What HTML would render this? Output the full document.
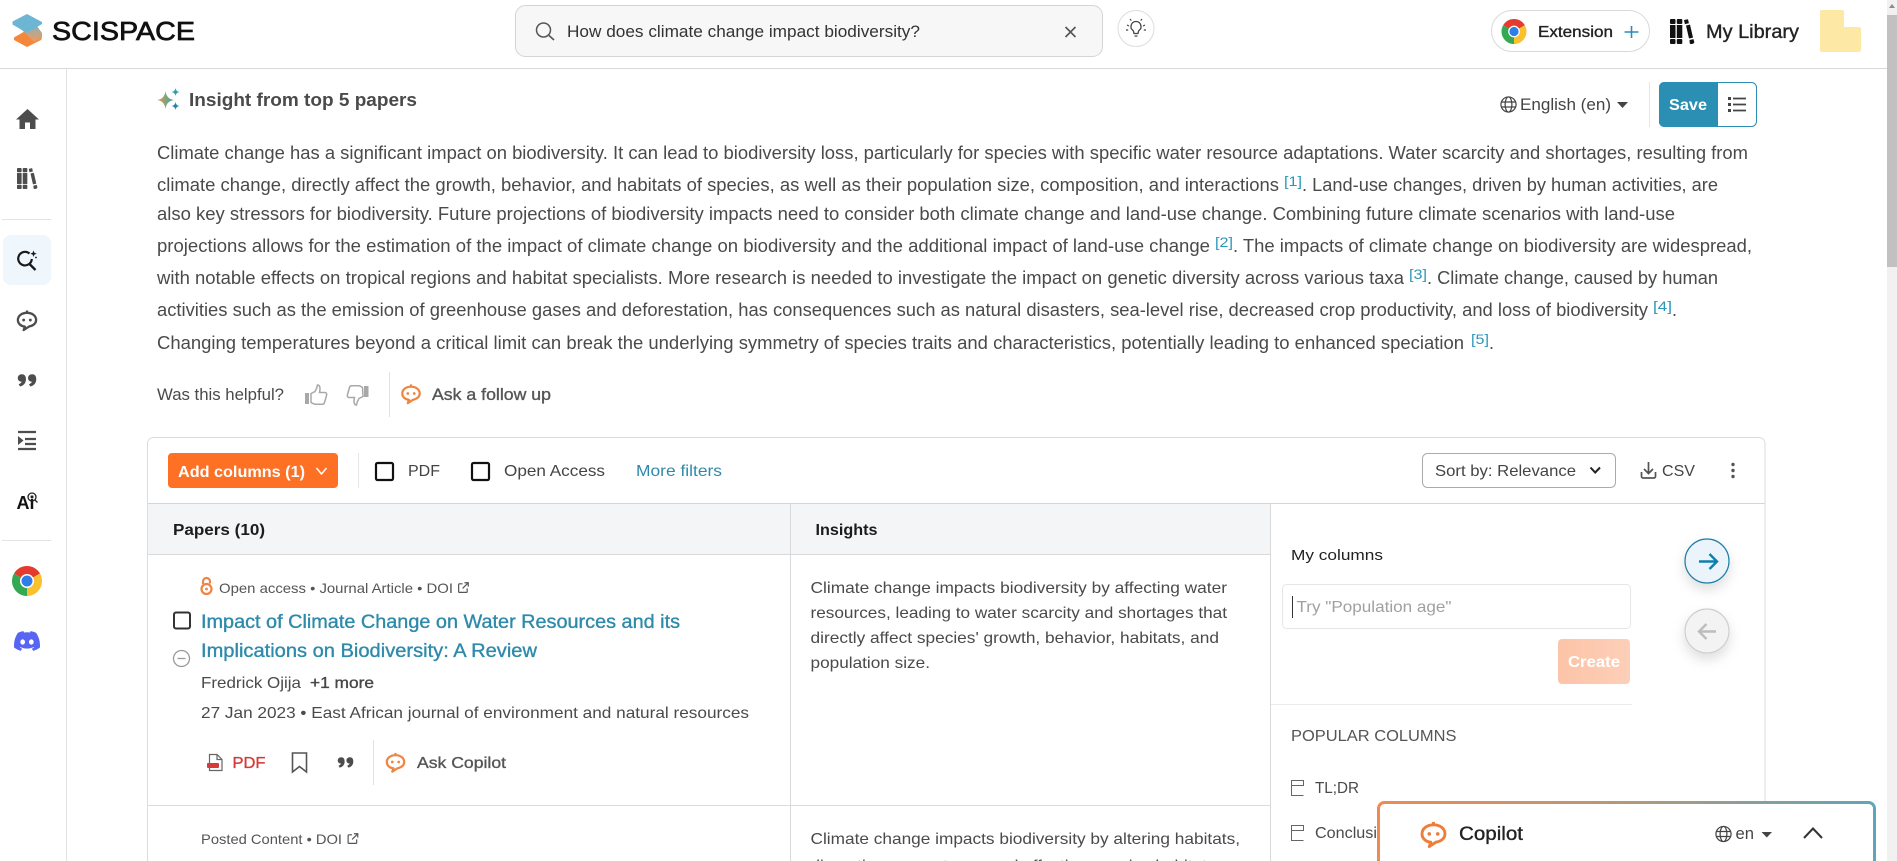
<!DOCTYPE html>
<html lang="en"><head><meta charset="utf-8"><title>SciSpace</title>
<style>
html,body{margin:0;padding:0;width:1897px;height:861px;overflow:hidden;background:#fff}
svg{display:block;font-family:"Liberation Sans",sans-serif}
.b{font-size:18px;fill:#4a4a4a}
.s{font-size:16px;fill:#4a4a4a}
.m{stroke-width:.35px;paint-order:stroke}
.cite{font-size:14px;fill:#2b97b8}
.link{fill:#2e8aaa}
</style></head><body>
<svg width="1897" height="861" viewBox="0 0 1897 861" xmlns="http://www.w3.org/2000/svg">
<defs>
<linearGradient id="cb" x1="0" x2="1" y1="0" y2="0"><stop offset="0" stop-color="#f08a52"/><stop offset=".5" stop-color="#b59878"/><stop offset="1" stop-color="#5fa5ba"/></linearGradient>
<linearGradient id="spk" x1="0" x2="1" y1="0" y2="0"><stop offset="0" stop-color="#e59a55"/><stop offset="1" stop-color="#32a89f"/></linearGradient>
<linearGradient id="lg" x1="0" x2="0" y1="0" y2="1"><stop offset="0" stop-color="#8fb0b4"/><stop offset="1" stop-color="#f39a5a"/></linearGradient>
<linearGradient id="cr" x1="0" x2="1" y1="0" y2="0"><stop offset="0" stop-color="#fcc4a8"/><stop offset="1" stop-color="#fdcfb8"/></linearGradient>
<filter id="sh" x="-50%" y="-50%" width="200%" height="220%"><feDropShadow dx="0" dy="6" stdDeviation="6" flood-color="#000" flood-opacity=".13"/></filter>
<symbol id="chat" viewBox="0 0 24 24"><path d="M12 4C6.500 4 2.500 7.200 2.500 11.500c0 3.700 3 6.500 7.300 6.900L8.500 22l5.600-3.700c4.400-.7 7.400-3.300 7.400-6.800C21.500 7.200 17.500 4 12 4zM12 4V1.500" fill="none" stroke="currentColor" stroke-width="2.400" stroke-linejoin="round"/><circle cx="8.500" cy="11.500" r="1.500" fill="currentColor"/><circle cx="15.500" cy="11.500" r="1.500" fill="currentColor"/></symbol>
<symbol id="quo" viewBox="0 0 24 17"><path d="M5.500 1C2.500 1 1 2.800 1 5s1.500 4 4 4c.5 0 1 0 1.300-.2-.4 2-1.700 3.500-3.800 4.400L3.500 15C7.500 14 10 10.800 10 6.500 10 3 8.300 1 5.500 1zM18.500 1C15.500 1 14 2.800 14 5s1.500 4 4 4c.5 0 1 0 1.300-.2-.4 2-1.700 3.500-3.800 4.400l1 1.800c4-1 6.500-4.200 6.500-8.500C23 3 21.300 1 18.500 1z" fill="currentColor" stroke="currentColor" stroke-width="1.400"/></symbol>
<symbol id="ext" viewBox="0 0 12 12"><path d="M5 2H1.500A.8.800 0 0 0 .7 2.800v7.700a.8.800 0 0 0 .8.800h7.700a.8.800 0 0 0 .8-.8V7M7 .8h4.200V5M11 1 5 7" fill="none" stroke="currentColor" stroke-width="1.300"/></symbol>
<symbol id="chrome" viewBox="-12 -12 24 24"><path d="M0 0L-10.390 -6A12 12 0 0 1 10.390 -6Z" fill="#e33b2e"/><path d="M0 0L10.390 -6A12 12 0 0 1 0 12Z" fill="#fbc02d"/><path d="M0 0L0 12A12 12 0 0 1 -10.390 -6Z" fill="#35a853"/><circle r="5.600" fill="#fff"/><circle r="4.400" fill="#2f7ee8"/></symbol>
<symbol id="lib" viewBox="0 0 25 25"><g fill="currentColor"><rect x="0" y="0" width="5.500" height="5" rx="1"/><rect x="0" y="6" width="5.500" height="13"/><rect x="0" y="20" width="5.500" height="5" rx="1"/><rect x="6.800" y="0" width="5.500" height="5" rx="1"/><rect x="6.800" y="6" width="5.500" height="13"/><rect x="6.800" y="20" width="5.500" height="5" rx="1"/><path d="M14 1l4-.8.9 4-4 .9zM16 6.500l4-.9 3 13-4 .9zM19.500 21l4-.9.7 2.700c.2 1-.5 1.700-1.300 1.900l-1.500.3c-.8.200-1.500-.3-1.700-1z"/></g></symbol>
<symbol id="glob" viewBox="0 0 18 18"><g fill="none" stroke="currentColor" stroke-width="1.300"><circle cx="9" cy="9" r="8"/><ellipse cx="9" cy="9" rx="3.600" ry="8"/><path d="M1.200 6.300h15.600M1.200 11.700h15.600"/></g></symbol>
<symbol id="col" viewBox="0 0 13 16"><path d="M.5.500h12v5H.5zM.5 5.500v10h12" fill="none" stroke="#666" stroke-width="1"/></symbol>
</defs>

<!-- scrollbar -->
<rect x="1887" y="0" width="10" height="861" fill="#f1f1f1"/>
<rect x="1887" y="15" width="10" height="252" fill="#c1c1c1"/>
<path d="M1892 4l3 4h-6z" fill="#8a8a8a"/>

<!-- header -->
<rect x="0" y="68" width="1887" height="1" fill="#d9d9d9"/>
<path d="M14 37.500L27 30l15 8-1 2-14 7-13-7z" fill="#f5873a"/>
<path d="M18 26l9 6 10-6 5 7v5l-8 4-10-10z" fill="url(#lg)"/>
<path d="M12.500 21.500L27 14l15 8v2L27 33l-14.500-8.500z" fill="#6cb6d4"/>
<text x="52" y="40" font-size="26" fill="#111" stroke="#111" stroke-width=".7" textLength="143" lengthAdjust="spacingAndGlyphs">SCISPACE</text>

<rect x="515.500" y="5.500" width="587" height="51" rx="10" fill="#f7f7f8" stroke="#d4d4d4"/>
<circle cx="543.500" cy="30" r="7" fill="none" stroke="#555" stroke-width="1.500"/><path d="M549 35.500l5 4.500" stroke="#555" stroke-width="1.600"/>
<text x="567" y="37" class="s" style="font-size:16.500px;fill:#333" textLength="353" lengthAdjust="spacingAndGlyphs">How does climate change impact biodiversity?</text>
<path d="M1065.500 27l10 10M1075.500 27l-10 10" stroke="#555" stroke-width="1.600"/>
<ellipse cx="1136" cy="28.500" rx="18" ry="18" fill="#fff" stroke="#dcdcdc"/>
<path d="M1136 21.500a5 5 0 0 0-3 9c.6.500.8 2 1 3h4c.2-1 .4-2.500 1-3a5 5 0 0 0-3-9z" fill="none" stroke="#444" stroke-width="1.300"/><path d="M1134.500 36h3M1127 25l2 1M1145 25l-2 1M1126 30h2.200M1146 30h-2.200M1130 19l1.200 1.500M1142 19l-1.200 1.500" stroke="#444" stroke-width="1.200"/>

<rect x="1491.500" y="10.500" width="158" height="41" rx="20.500" fill="#fff" stroke="#d9d9d9"/>
<use href="#chrome" x="1501.500" y="19" width="25" height="25"/>
<text x="1538" y="37" class="m" font-size="16" fill="#222" stroke="#222" textLength="75" lengthAdjust="spacingAndGlyphs">Extension</text>
<path d="M1631.500 26v12M1624.500 32h14" stroke="#2a8fb5" stroke-width="1.600"/>
<use href="#lib" x="1670" y="19" width="25" height="25" color="#111"/>
<text x="1706" y="38" class="m" font-size="19" fill="#222" stroke="#222" textLength="93" lengthAdjust="spacingAndGlyphs">My Library</text>
<path d="M1822 10h20a2 2 0 0 1 2 2v15h15a2 2 0 0 1 2 2v21a2 2 0 0 1-2 2h-37a2 2 0 0 1-2-2V12a2 2 0 0 1 2-2z" fill="#fde9a5"/>

<!-- sidebar -->
<rect x="66" y="69" width="1" height="792" fill="#e3e3e3"/>
<path d="M27.500 109L16 119.500h3.500V129h5.500v-6.500h5V129h5.500v-9.500H39z" fill="#4d4d4d"/>
<use href="#lib" x="17" y="168" width="21" height="21" color="#4d4d4d"/>
<rect x="2" y="219" width="49" height="1" fill="#e3e3e3"/>
<rect x="3" y="235" width="48" height="50" rx="8" fill="#eff7fd"/>
<path d="M29.500 253.500A6.800 6.800 0 1 0 31.800 259" fill="none" stroke="#1a1a1a" stroke-width="2.200"/><path d="M29.500 264l6 6" stroke="#1a1a1a" stroke-width="2.400"/><path d="M33.500 250.500l.9 2.300 2.300.9-2.300.9-.9 2.300-.9-2.300-2.300-.9 2.300-.9z" fill="#1a1a1a"/><circle cx="36" cy="257.500" r=".9" fill="#1a1a1a"/>
<use href="#chat" x="15.500" y="309" width="23" height="23" color="#4d4d4d"/>
<use href="#quo" x="17.500" y="374" width="19" height="13.500" color="#4d4d4d"/>
<path d="M18 432h18M25 439h11M25 444h11M18 449h18" stroke="#4d4d4d" stroke-width="2.200" fill="none"/><path d="M18 436v9l5.500-4.500z" fill="#4d4d4d"/>
<text x="16.500" y="509" font-size="18" font-weight="700" fill="#111">Ai</text><circle cx="32" cy="497" r="4" fill="none" stroke="#222" stroke-width="1.300"/><circle cx="32" cy="497" r="1.500" fill="#222"/><path d="M35 500l2.500 2.500" stroke="#222" stroke-width="1.300"/>
<rect x="2" y="540" width="49" height="1" fill="#e3e3e3"/>
<use href="#chrome" x="12" y="566" width="30" height="30"/>
<svg x="14" y="628" width="26" height="26" viewBox="0 0 24 24"><path fill="#5865f2" d="M20.317 4.370a19.791 19.791 0 0 0-4.885-1.515.074.074 0 0 0-.079.037c-.21.375-.444.864-.608 1.250a18.270 18.270 0 0 0-5.487 0 12.640 12.640 0 0 0-.617-1.250.077.077 0 0 0-.079-.037A19.736 19.736 0 0 0 3.677 4.370a.07.07 0 0 0-.032.027C.533 9.046-.32 13.580.099 18.057a.082.082 0 0 0 .031.057 19.900 19.900 0 0 0 5.993 3.030.078.078 0 0 0 .084-.028 14.090 14.090 0 0 0 1.226-1.994.076.076 0 0 0-.041-.106 13.107 13.107 0 0 1-1.872-.892.077.077 0 0 1-.008-.128 10.200 10.200 0 0 0 .372-.292.074.074 0 0 1 .077-.01c3.928 1.793 8.180 1.793 12.062 0a.074.074 0 0 1 .078.01c.12.098.246.198.373.292a.077.077 0 0 1-.006.127 12.299 12.299 0 0 1-1.873.892.077.077 0 0 0-.041.107c.36.698.772 1.362 1.225 1.993a.076.076 0 0 0 .084.028 19.839 19.839 0 0 0 6.002-3.030.077.077 0 0 0 .032-.054c.5-5.177-.838-9.674-3.549-13.660a.061.061 0 0 0-.031-.03zM8.020 15.330c-1.183 0-2.157-1.085-2.157-2.419 0-1.333.956-2.419 2.157-2.419 1.210 0 2.176 1.096 2.157 2.420 0 1.333-.956 2.418-2.157 2.418zm7.975 0c-1.183 0-2.157-1.085-2.157-2.419 0-1.333.955-2.419 2.157-2.419 1.210 0 2.176 1.096 2.157 2.420 0 1.333-.946 2.418-2.157 2.418z"/></svg>

<!-- insight head -->
<path d="M165.500 91Q166.500 99 174 100Q166.500 101 165.500 109Q164.500 101 157 100Q164.500 99 165.500 91Z" fill="url(#spk)"/>
<path d="M175.500 88Q176 91.500 179.500 92Q176 92.500 175.500 96Q175 92.500 171.500 92Q175 91.500 175.500 88Z" fill="#2ba0b0"/>
<path d="M175.500 102Q176 105.500 179.500 106Q176 106.500 175.500 110Q175 106.500 171.500 106Q175 105.500 175.500 102Z" fill="#1f86b0"/>
<text x="189" y="106" font-size="18" font-weight="700" fill="#4a4a4a" textLength="228" lengthAdjust="spacingAndGlyphs">Insight from top 5 papers</text>

<use href="#glob" x="1500" y="96" width="17" height="17" color="#444"/>
<text x="1520" y="110" font-size="17" fill="#444" textLength="91" lengthAdjust="spacingAndGlyphs">English (en)</text>
<path d="M1617 102h11l-5.500 6z" fill="#444"/>
<rect x="1649" y="82" width="1" height="45" fill="#e6e6e6"/>
<rect x="1659.500" y="82.500" width="97" height="44" rx="5" fill="#fff" stroke="#2b8fb3"/>
<path d="M1664 82h54v45h-54a5 5 0 0 1-5-5V87a5 5 0 0 1 5-5z" fill="#2b8fb3"/>
<text x="1669" y="110" font-size="16" font-weight="700" fill="#fff" textLength="38" lengthAdjust="spacingAndGlyphs">Save</text>
<path d="M1733 98.500h13M1733 104.500h13M1733 110.500h13" stroke="#444" stroke-width="1.700"/><rect x="1728" y="97" width="3" height="3" fill="#444"/><rect x="1728" y="103" width="3" height="3" fill="#444"/><rect x="1728" y="109" width="3" height="3" fill="#444"/>

<!-- paragraph -->
<text class="b" x="157" y="159" textLength="1591" lengthAdjust="spacingAndGlyphs">Climate change has a significant impact on biodiversity. It can lead to biodiversity loss, particularly for species with specific water resource adaptations. Water scarcity and shortages, resulting from</text>
<text class="b" x="157" y="191" textLength="1122" lengthAdjust="spacingAndGlyphs">climate change, directly affect the growth, behavior, and habitats of species, as well as their population size, composition, and interactions</text>
<text class="cite" x="1284" y="186" textLength="18" lengthAdjust="spacingAndGlyphs">[1]</text>
<text class="b" x="1302" y="191" textLength="416" lengthAdjust="spacingAndGlyphs">. Land-use changes, driven by human activities, are</text>
<text class="b" x="157" y="220" textLength="1518" lengthAdjust="spacingAndGlyphs">also key stressors for biodiversity. Future projections of biodiversity impacts need to consider both climate change and land-use change. Combining future climate scenarios with land-use</text>
<text class="b" x="157" y="252" textLength="1053" lengthAdjust="spacingAndGlyphs">projections allows for the estimation of the impact of climate change on biodiversity and the additional impact of land-use change</text>
<text class="cite" x="1215" y="247" textLength="18" lengthAdjust="spacingAndGlyphs">[2]</text>
<text class="b" x="1233" y="252" textLength="519" lengthAdjust="spacingAndGlyphs">. The impacts of climate change on biodiversity are widespread,</text>
<text class="b" x="157" y="284" textLength="1247" lengthAdjust="spacingAndGlyphs">with notable effects on tropical regions and habitat specialists. More research is needed to investigate the impact on genetic diversity across various taxa</text>
<text class="cite" x="1409" y="279" textLength="18" lengthAdjust="spacingAndGlyphs">[3]</text>
<text class="b" x="1427" y="284" textLength="291" lengthAdjust="spacingAndGlyphs">. Climate change, caused by human</text>
<text class="b" x="157" y="316" textLength="1491" lengthAdjust="spacingAndGlyphs">activities such as the emission of greenhouse gases and deforestation, has consequences such as natural disasters, sea-level rise, decreased crop productivity, and loss of biodiversity</text>
<text class="cite" x="1653" y="311" textLength="19" lengthAdjust="spacingAndGlyphs">[4]</text>
<text class="b" x="1672" y="316">.</text>
<text class="b" x="157" y="349" textLength="1307" lengthAdjust="spacingAndGlyphs">Changing temperatures beyond a critical limit can break the underlying symmetry of species traits and characteristics, potentially leading to enhanced speciation</text>
<text class="cite" x="1471" y="344" textLength="18" lengthAdjust="spacingAndGlyphs">[5]</text>
<text class="b" x="1489" y="349">.</text>

<!-- helpful -->
<text class="s" x="157" y="400" style="font-size:16.500px" textLength="127" lengthAdjust="spacingAndGlyphs">Was this helpful?</text>
<g fill="none" stroke="#a8a8a8" stroke-width="1.500"><path d="M311 393.500l4-2c1-1.500 2-3 2.500-6.500 2.500 0 3 3 2 7.500h5.500c1.500 0 2 1.500 1.500 3l-2 7c-.3 1-1 1.700-2 1.700h-7c-1.500 0-2.500-.7-4.500-1.700z"/><path d="M363 396.500l-4 2c-1 1.500-2 3-2.500 6.500-2.500 0-3-3-2-7.500H349c-1.500 0-2-1.500-1.500-3l2-7c.3-1 1-1.700 2-1.700h7c1.500 0 2.500.7 4 1.700z"/></g>
<rect x="305" y="393" width="4" height="11" fill="#a8a8a8"/><rect x="364" y="386" width="4.500" height="11" fill="#a8a8a8"/>
<rect x="389" y="372" width="1" height="45" fill="#e3e3e3"/>
<use href="#chat" x="400" y="383" width="22" height="22" color="#ef8540"/>
<text x="432" y="400" class="m" font-size="16.500" fill="#555" stroke="#555" textLength="119" lengthAdjust="spacingAndGlyphs">Ask a follow up</text>

<!-- table -->
<rect x="147.500" y="437.500" width="1617.500" height="440" rx="6" fill="#fff" stroke="#dcdcdc"/>
<rect x="148" y="503.500" width="1122" height="50.500" fill="#f3f5f6"/>
<rect x="148" y="503" width="1617" height="1" fill="#d5d5d5"/>
<rect x="148" y="554" width="1122" height="1" fill="#d9d9d9"/>
<rect x="148" y="805" width="1122" height="1" fill="#dcdcdc"/>
<rect x="790" y="503" width="1" height="358" fill="#d9d9d9"/>
<rect x="1270" y="503" width="1" height="358" fill="#d9d9d9"/>

<rect x="168" y="453" width="170" height="35" rx="4" fill="#fe7124"/>
<text x="178" y="477" font-size="16" font-weight="700" fill="#fff" textLength="127" lengthAdjust="spacingAndGlyphs">Add columns (1)</text>
<path d="M316.500 468l5 6 5-6" fill="none" stroke="#fff" stroke-width="1.500"/>
<rect x="358" y="453" width="1" height="35" fill="#e6e6e6"/>
<rect x="376" y="463" width="17" height="17" rx="1.500" fill="#fff" stroke="#111" stroke-width="2.200"/>
<text class="s" x="408" y="476" style="fill:#444" textLength="32" lengthAdjust="spacingAndGlyphs">PDF</text>
<rect x="472" y="463" width="17" height="17" rx="1.500" fill="#fff" stroke="#111" stroke-width="2.200"/>
<text class="s" x="504" y="476" style="fill:#444" textLength="101" lengthAdjust="spacingAndGlyphs">Open Access</text>
<text class="s" x="636" y="476" style="fill:#2e8aaa" textLength="86" lengthAdjust="spacingAndGlyphs">More filters</text>

<rect x="1422.500" y="453.500" width="193" height="34" rx="5" fill="#fff" stroke="#ababab"/>
<text class="s" x="1435" y="476" style="fill:#444" textLength="141" lengthAdjust="spacingAndGlyphs">Sort by: Relevance</text>
<path d="M1590.500 467.500l4.700 5 4.800-5" fill="none" stroke="#222" stroke-width="2"/>
<path d="M1648.500 462v11M1644 469l4.500 4.500 4.500-4.500M1641.500 472v4.500a1.500 1.500 0 0 0 1.500 1.500h11a1.500 1.500 0 0 0 1.500-1.500V472" fill="none" stroke="#555" stroke-width="1.700"/>
<text class="s" x="1662" y="476" style="fill:#444" textLength="33" lengthAdjust="spacingAndGlyphs">CSV</text>
<circle cx="1733" cy="464.500" r="1.700" fill="#555"/><circle cx="1733" cy="470.500" r="1.700" fill="#555"/><circle cx="1733" cy="476.500" r="1.700" fill="#555"/>

<text x="173" y="535" font-size="16" font-weight="700" fill="#1c1c1c" textLength="92" lengthAdjust="spacingAndGlyphs">Papers (10)</text>
<text x="815.500" y="535" font-size="16" font-weight="700" fill="#1c1c1c" textLength="62" lengthAdjust="spacingAndGlyphs">Insights</text>

<!-- paper 1 -->
<g fill="none" stroke="#ee8344" stroke-width="2.200"><circle cx="206.500" cy="589" r="5"/><path d="M203 584v-2.500a3.500 3.500 0 0 1 7 0v2"/></g><circle cx="206.500" cy="589" r="1.400" fill="#ee8344"/>
<text x="219" y="593" font-size="14" fill="#555" textLength="234" lengthAdjust="spacingAndGlyphs">Open access • Journal Article • DOI</text>
<use href="#ext" x="458" y="582" width="11" height="11" color="#555"/>
<rect x="174" y="612.500" width="16" height="16" rx="2" fill="#fff" stroke="#333" stroke-width="2"/>
<text x="201" y="628" font-size="19" class="m link" stroke="#2e8aaa" textLength="479" lengthAdjust="spacingAndGlyphs">Impact of Climate Change on Water Resources and its</text>
<text x="201" y="657" font-size="19" class="m link" stroke="#2e8aaa" textLength="336" lengthAdjust="spacingAndGlyphs">Implications on Biodiversity: A Review</text>
<circle cx="181.500" cy="658.500" r="8" fill="#fff" stroke="#999" stroke-width="1.300"/><path d="M177.500 658.500h8" stroke="#999" stroke-width="1.300"/>
<text class="s" x="201" y="688" textLength="100" lengthAdjust="spacingAndGlyphs">Fredrick Ojija</text>
<text x="310" y="688" class="m" font-size="16" fill="#474747" stroke="#474747" textLength="64" lengthAdjust="spacingAndGlyphs">+1 more</text>
<text class="s" x="201" y="718" textLength="548" lengthAdjust="spacingAndGlyphs">27 Jan 2023 • East African journal of environment and natural resources</text>

<path d="M209.500 754.500h7.500l5 5v11h-12.500zM217 754.500v5h5" fill="#fff" stroke="#666" stroke-width="1.200"/><rect x="207" y="763" width="12" height="5" rx="1" fill="#d63a3a"/>
<text x="232.500" y="768" font-size="16" fill="#d63a3a" class="m" stroke="#d63a3a" textLength="33" lengthAdjust="spacingAndGlyphs">PDF</text>
<path d="M292.500 753h14v19l-7-5.500-7 5.500z" fill="none" stroke="#555" stroke-width="1.600"/>
<use href="#quo" x="337.500" y="757" width="16" height="11.500" color="#4d4d4d"/>
<rect x="373" y="740" width="1" height="45" fill="#e3e3e3"/>
<use href="#chat" x="384.500" y="751.500" width="22" height="22" color="#ef8540"/>
<text x="417" y="768" class="m" font-size="16" fill="#555" stroke="#555" textLength="89" lengthAdjust="spacingAndGlyphs">Ask Copilot</text>

<text class="s" x="810.500" y="593" textLength="416.500" lengthAdjust="spacingAndGlyphs">Climate change impacts biodiversity by affecting water</text>
<text class="s" x="810.500" y="618" textLength="416.500" lengthAdjust="spacingAndGlyphs">resources, leading to water scarcity and shortages that</text>
<text class="s" x="810.500" y="643" textLength="408.500" lengthAdjust="spacingAndGlyphs">directly affect species' growth, behavior, habitats, and</text>
<text class="s" x="810.500" y="668" textLength="119.500" lengthAdjust="spacingAndGlyphs">population size.</text>

<!-- paper 2 -->
<text x="201" y="844" font-size="14" fill="#555" textLength="141" lengthAdjust="spacingAndGlyphs">Posted Content • DOI</text>
<use href="#ext" x="347.500" y="833" width="11" height="11" color="#555"/>
<text class="s" x="810.500" y="844" textLength="429.500" lengthAdjust="spacingAndGlyphs">Climate change impacts biodiversity by altering habitats,</text>
<text class="s" x="810.500" y="871" textLength="405" lengthAdjust="spacingAndGlyphs">disrupting ecosystems, and affecting species habitats</text>

<!-- columns panel -->
<text x="1291" y="560" class="m" font-size="15" fill="#222" textLength="92" lengthAdjust="spacingAndGlyphs">My columns</text>
<rect x="1282.500" y="584.500" width="348" height="44" rx="4" fill="#fff" stroke="#e6e6e6"/>
<rect x="1292" y="596" width="1" height="22" fill="#333"/>
<text x="1296.500" y="612" font-size="16" fill="#a0a0a0" textLength="155" lengthAdjust="spacingAndGlyphs">Try "Population age"</text>
<rect x="1558" y="639" width="72" height="45" rx="4" fill="url(#cr)"/>
<text x="1568" y="667" font-size="16" font-weight="700" fill="#fff" textLength="52" lengthAdjust="spacingAndGlyphs">Create</text>
<rect x="1271" y="704" width="361" height="1" fill="#ebebeb"/>
<text x="1291" y="741" font-size="16" fill="#555" textLength="165.500" lengthAdjust="spacingAndGlyphs">POPULAR COLUMNS</text>
<use href="#col" x="1291" y="780" width="13" height="16"/>
<text class="s" x="1315" y="793" textLength="44" lengthAdjust="spacingAndGlyphs">TL;DR</text>
<use href="#col" x="1291" y="825" width="13" height="16"/>
<text class="s" x="1315" y="838" textLength="88" lengthAdjust="spacingAndGlyphs">Conclusions</text>

<circle cx="1707" cy="561" r="22" fill="#eaf4fa" stroke="#1d7ea6" stroke-width="1.200" filter="url(#sh)"/>
<path d="M1699 561.500h17M1709.500 554l7.500 7.500-7.500 7.500" fill="none" stroke="#0e80ad" stroke-width="2.400"/>
<circle cx="1707" cy="631" r="22" fill="#f3f3f3" stroke="#cfcfcf" stroke-width="1.200" filter="url(#sh)"/>
<path d="M1716 631.500h-17M1706.500 624l-7.500 7.500 7.500 7.500" fill="none" stroke="#bdbdbd" stroke-width="2.400"/>

<!-- copilot -->
<rect x="1378.500" y="802.500" width="496" height="80" rx="6" fill="#fff" stroke="url(#cb)" stroke-width="3"/>
<use href="#chat" x="1419" y="820" width="29" height="29" color="#ef7d3a"/>
<text x="1459" y="840" class="m" font-size="19" fill="#222" stroke="#222" textLength="64" lengthAdjust="spacingAndGlyphs">Copilot</text>
<use href="#glob" x="1715" y="825.500" width="17" height="17" color="#444"/>
<text x="1735.500" y="839" font-size="17" fill="#444" textLength="18.500" lengthAdjust="spacingAndGlyphs">en</text>
<path d="M1761.500 832h10.500l-5.200 5.500z" fill="#444"/>
<path d="M1804 838l9-9.500 9 9.500" fill="none" stroke="#333" stroke-width="2"/>
</svg>
</body></html>
